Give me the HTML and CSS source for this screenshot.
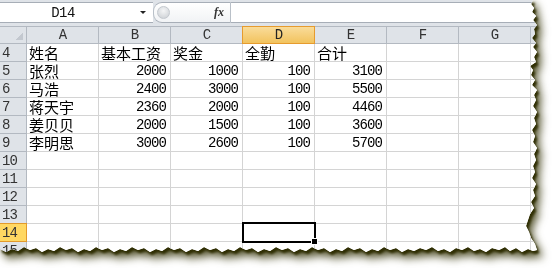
FILE: index.html
```html
<!DOCTYPE html>
<html lang="zh">
<head>
    <meta charset="UTF-8" />
    <title>工资表</title>
    <link rel="stylesheet" href="styles.css">
</head>
<body>
    <div class="paper-wrap">
        <div class="paper">
            <div class="formula-bar">
                <div class="name-box">
                    <span class="cell-name">D14</span>
                    <span class="drop-arrow"></span>
                </div>
                <div class="fx-box">
                    <span class="knob"></span>
                    <span class="fx">fx</span>
                </div>
                <div class="formula-input"></div>
            </div>

            <div class="grid">
                <div class="hd corner"></div>
                <div class="hd col">A</div>
                <div class="hd col">B</div>
                <div class="hd col">C</div>
                <div class="hd col active">D</div>
                <div class="hd col">E</div>
                <div class="hd col">F</div>
                <div class="hd col">G</div>
                <div class="hd col"></div>

                <div class="hd row">4</div>
                <div class="c txt">姓名</div>
                <div class="c txt">基本工资</div>
                <div class="c txt">奖金</div>
                <div class="c txt">全勤</div>
                <div class="c txt">合计</div>
                <div class="c"></div><div class="c"></div><div class="c"></div>

                <div class="hd row">5</div>
                <div class="c txt">张烈</div>
                <div class="c num">2000</div>
                <div class="c num">1000</div>
                <div class="c num">100</div>
                <div class="c num">3100</div>
                <div class="c"></div><div class="c"></div><div class="c"></div>

                <div class="hd row">6</div>
                <div class="c txt">马浩</div>
                <div class="c num">2400</div>
                <div class="c num">3000</div>
                <div class="c num">100</div>
                <div class="c num">5500</div>
                <div class="c"></div><div class="c"></div><div class="c"></div>

                <div class="hd row">7</div>
                <div class="c txt">蒋天宇</div>
                <div class="c num">2360</div>
                <div class="c num">2000</div>
                <div class="c num">100</div>
                <div class="c num">4460</div>
                <div class="c"></div><div class="c"></div><div class="c"></div>

                <div class="hd row">8</div>
                <div class="c txt">姜贝贝</div>
                <div class="c num">2000</div>
                <div class="c num">1500</div>
                <div class="c num">100</div>
                <div class="c num">3600</div>
                <div class="c"></div><div class="c"></div><div class="c"></div>

                <div class="hd row">9</div>
                <div class="c txt">李明思</div>
                <div class="c num">3000</div>
                <div class="c num">2600</div>
                <div class="c num">100</div>
                <div class="c num">5700</div>
                <div class="c"></div><div class="c"></div><div class="c"></div>

                <div class="hd row">10</div>
                <div class="c"></div><div class="c"></div><div class="c"></div><div class="c"></div>
                <div class="c"></div><div class="c"></div><div class="c"></div><div class="c"></div>

                <div class="hd row">11</div>
                <div class="c"></div><div class="c"></div><div class="c"></div><div class="c"></div>
                <div class="c"></div><div class="c"></div><div class="c"></div><div class="c"></div>

                <div class="hd row">12</div>
                <div class="c"></div><div class="c"></div><div class="c"></div><div class="c"></div>
                <div class="c"></div><div class="c"></div><div class="c"></div><div class="c"></div>

                <div class="hd row">13</div>
                <div class="c"></div><div class="c"></div><div class="c"></div><div class="c"></div>
                <div class="c"></div><div class="c"></div><div class="c"></div><div class="c"></div>

                <div class="hd row active">14</div>
                <div class="c"></div><div class="c"></div><div class="c"></div>
                <div class="c selected"><span class="sel-box"></span><span class="fill-handle"></span></div>
                <div class="c"></div><div class="c"></div><div class="c"></div><div class="c"></div>

                <div class="hd row">15</div>
                <div class="c"></div><div class="c"></div><div class="c"></div><div class="c"></div>
                <div class="c"></div><div class="c"></div><div class="c"></div><div class="c"></div>
            </div>
        </div>
    </div>
</body>
</html>
```

FILE: styles.css
```css
html, body {
    margin: 0;
    padding: 0;
    background: #fff;
}

body {
    width: 556px;
    height: 268px;
    overflow: hidden;
    font-family: "Liberation Mono", "Noto Sans CJK SC", monospace;
    color: #000;
}

/* torn paper + dark shadow */
.paper-wrap {
    width: 545px;
    height: 258px;
    filter: drop-shadow(2px 3px 1px #302f04) drop-shadow(3px 4px 4px rgba(52, 50, 6, 0.85));
}

.paper {
    width: 545px;
    height: 258px;
    overflow: hidden;
    background: #fff;
    clip-path: polygon(
        0 0, 533px 0, 531px 4px, 534px 8px, 532px 12px, 536px 16px, 533px 20px, 537px 25px,
        534px 29px, 535px 34px, 532px 38px, 536px 43px, 533px 47px, 537px 52px, 534px 57px,
        536px 62px, 530px 66px, 533px 70px, 531px 75px, 535px 80px, 532px 85px, 537px 90px,
        534px 95px, 536px 100px, 533px 106px, 537px 112px, 534px 118px, 536px 124px, 532px 130px,
        535px 136px, 533px 142px, 537px 148px, 534px 154px, 536px 160px, 533px 166px, 535px 172px,
        532px 178px, 536px 184px, 533px 190px, 535px 196px, 531px 202px, 534px 208px, 530px 214px,
        528px 220px, 526px 226px, 529px 232px, 531px 238px, 535px 244px, 537px 250px,
        533px 251px, 528px 249px, 522px 252px, 516px 248px, 510px 251px, 505px 247px, 499px 250px,
        492px 248px, 486px 252px, 480px 249px, 474px 251px, 468px 247px, 462px 250px, 456px 248px,
        450px 252px, 444px 249px, 438px 251px, 432px 247px, 426px 250px, 420px 248px, 414px 251px,
        408px 249px, 402px 252px, 396px 248px, 390px 250px, 384px 247px, 378px 251px, 372px 249px,
        366px 252px, 360px 248px, 354px 250px, 348px 247px, 342px 251px, 336px 249px, 330px 252px,
        324px 248px, 318px 250px, 312px 247px, 306px 251px, 300px 249px, 294px 252px, 288px 248px,
        282px 250px, 276px 247px, 270px 251px, 264px 249px, 258px 252px, 252px 248px, 246px 250px,
        240px 247px, 234px 251px, 228px 249px, 222px 252px, 216px 248px, 210px 250px, 204px 247px,
        198px 251px, 192px 249px, 186px 252px, 180px 248px, 174px 250px, 168px 247px, 162px 251px,
        156px 249px, 150px 252px, 144px 248px, 138px 250px, 132px 247px, 126px 251px, 120px 249px,
        114px 252px, 108px 248px, 102px 250px, 96px 247px, 90px 251px, 84px 249px, 78px 252px,
        72px 248px, 66px 250px, 60px 247px, 54px 251px, 48px 249px, 42px 252px, 36px 248px,
        30px 250px, 24px 247px, 18px 251px, 12px 249px, 6px 252px, 0 249px
    );
}

/* formula bar */
.formula-bar {
    height: 26px;
    box-sizing: border-box;
    padding-top: 2px;
    background: #dfe3e8;
    display: flex;
    align-items: flex-start;
}

.name-box,
.fx-box,
.formula-input {
    height: 21px;
    box-sizing: border-box;
    border-top: 1px solid #a7aeb7;
    border-bottom: 1px solid #a7aeb7;
    background: #fff;
}

.name-box {
    width: 153px;
    display: flex;
    align-items: center;
}

.cell-name {
    width: 126px;
    text-align: center;
    font-size: 14px;
    letter-spacing: -0.6px;
    color: #111;
}

.drop-arrow {
    margin-left: 14px;
    width: 0;
    height: 0;
    border-left: 3px solid transparent;
    border-right: 3px solid transparent;
    border-top: 3px solid #222;
}

.fx-box {
    width: 78px;
    border-left: 1px solid #b9c0c8;
    border-right: 1px solid #b9c0c8;
    border-radius: 9px 0 0 9px;
    background: linear-gradient(#ffffff, #f1f3f5);
    display: flex;
    align-items: center;
    justify-content: space-between;
    padding: 0 6px 0 3px;
}

.knob {
    width: 11px;
    height: 11px;
    border-radius: 50%;
    background: radial-gradient(circle at 50% 35%, #f4f5f6, #c9cdd2);
    border: 1px solid #c3c8ce;
}

.fx {
    font-family: "Liberation Serif", serif;
    font-style: italic;
    font-weight: bold;
    font-size: 12px;
    color: #333;
}

.formula-input {
    flex: 1;
}

/* sheet grid */
.grid {
    display: grid;
    grid-template-columns: 27px repeat(8, 72px);
    grid-template-rows: 18px;
    grid-auto-rows: 18px;
}

.hd,
.c {
    box-sizing: border-box;
    border-right: 1px solid #d4d4d4;
    border-bottom: 1px solid #d4d4d4;
    white-space: nowrap;
}

.hd {
    background: #dfe3e8;
    border-color: #b3b9c1;
    color: #333;
    font-size: 14px;
    letter-spacing: -0.9px;
    line-height: 17px;
}

.hd.col {
    border-top: 1px solid #b3b9c1;
    line-height: 16px;
    text-align: center;
}

.hd.corner {
    border-top: 1px solid #b3b9c1;
    background: #dfe3e8 linear-gradient(135deg, transparent 65%, #c3c8cf 65%) no-repeat 13px 3px / 10px 10px;
}

.hd.row {
    padding-left: 2px;
    line-height: 18px;
}

.hd.col.active {
    background: linear-gradient(#f9dc9a, #f2c35e);
    border-color: #e69b2e;
    border-left: 1px solid #e69b2e;
    margin-left: -1px;
    color: #222;
}

.hd.row.active {
    background: #ffd862;
    border-color: #e29a2b;
    border-top: 1px solid #e29a2b;
    margin-top: -1px;
    line-height: 18px;
}

.c {
    background: #fff;
    font-size: 14px;
    letter-spacing: -0.9px;
    line-height: 18px;
}

.c.txt {
    font-family: "Noto Sans CJK SC", sans-serif;
    font-size: 15px;
    letter-spacing: 0;
    line-height: 18px;
    padding-left: 2px;
}

.c.num {
    text-align: right;
    padding-right: 4px;
}

.c.selected {
    position: relative;
}

.sel-box {
    position: absolute;
    left: -1px;
    top: -2px;
    right: -2px;
    bottom: -2px;
    border: 2px solid #000;
}

.fill-handle {
    position: absolute;
    right: -4px;
    bottom: -4px;
    width: 5px;
    height: 5px;
    background: #000;
    border: 1px solid #fff;
}
```
